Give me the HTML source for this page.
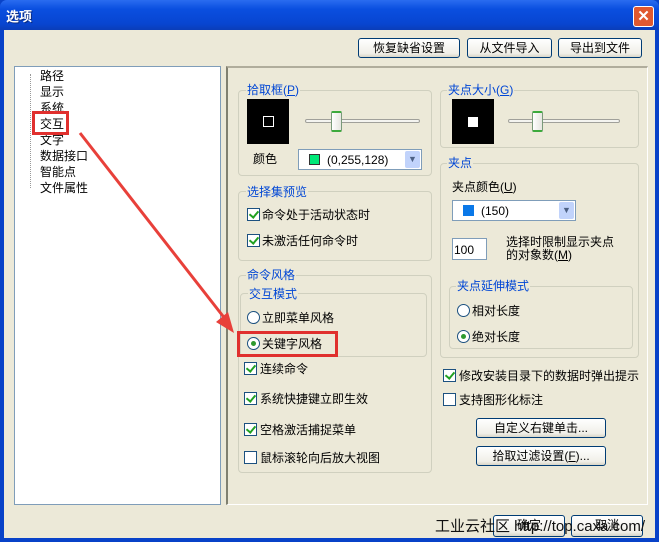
<!DOCTYPE html>
<html><head><meta charset="utf-8"><style>
*{box-sizing:border-box;margin:0;padding:0}
body{width:659px;height:542px;overflow:hidden;background:#0842c8;font-family:"Liberation Sans","Noto Sans CJK SC","WenQuanYi Zen Hei",sans-serif;font-size:12px;color:#000;position:relative}
.a{position:absolute;white-space:nowrap}
#title{left:0;top:0;width:659px;height:30px;background:linear-gradient(#2a6cf0,#0a4fe0 30%,#0845d0 80%,#0a3db8);border-radius:7px 7px 0 0}
#client{left:4px;top:30px;width:651px;height:508px;background:#ece9d8}
.btn{position:absolute;border:1px solid #003c74;border-radius:3px;background:linear-gradient(#fff,#f0efe8 80%,#d8d5c8);text-align:center;font-size:12px;line-height:18px}
.grp{position:absolute;border:1px solid #d0d0bf;border-radius:4px}
.gl{position:absolute;background:#ece9d8;color:#0046d5;padding:0 1px;font-size:12px;line-height:14px}
.cb{position:absolute;width:13px;height:13px;border:1px solid #1c5180;background:#fff}
.cb.c::after{content:"";position:absolute;left:3px;top:0px;width:4px;height:7px;border:solid #21a121;border-width:0 2px 2px 0;transform:rotate(40deg)}
.rb{position:absolute;width:13px;height:13px;border:1px solid #1c5180;border-radius:50%;background:#fff}
.rb.c::after{content:"";position:absolute;left:3px;top:3px;width:5px;height:5px;border-radius:50%;background:#2f9a2f}
.t{position:absolute;white-space:nowrap;font-size:12px;line-height:14px}
.blk{position:absolute;background:#000;width:42px;height:45px}
.sl{position:absolute;height:4px;border:1px solid #a0a09a;background:#f4f4f0;border-radius:2px}
.th{position:absolute;width:11px;height:21px;border:1px solid #7a9a7a;border-radius:2px;background:linear-gradient(90deg,#fff,#e6e6e0);border-top:2px solid #3caa3c;border-bottom:2px solid #3caa3c}
.combo{position:absolute;border:1px solid #7f9db9;background:#fff;height:21px}
.dd{position:absolute;right:1px;top:1px;width:15px;height:17px;background:#c1d3fb;border-radius:2px;color:#4d6185;font-size:9px;text-align:center;line-height:17px}
.red{position:absolute;border:3px solid #e0302e}
</style></head><body>
<div class="a" id="title"></div>
<div class="a" style="left:6px;top:6px;color:#fff;font-weight:bold;font-size:13px;text-shadow:1px 1px #0a2a80">选项</div>
<div class="a" style="left:633px;top:6px;width:21px;height:21px;border:1px solid #fff;border-radius:3px;background:#e0582f;color:#fff;font-size:15px;font-weight:bold;text-align:center;line-height:19px">✕</div>
<div class="a" id="client"></div>

<div class="btn" style="left:358px;top:38px;width:102px;height:20px">恢复缺省设置</div>
<div class="btn" style="left:467px;top:38px;width:85px;height:20px">从文件导入</div>
<div class="btn" style="left:558px;top:38px;width:84px;height:20px">导出到文件</div>

<div class="a" style="left:14px;top:66px;width:207px;height:439px;background:#fff;border:1px solid #7f9db9"></div>
<div class="a" style="left:30px;top:74px;height:114px;border-left:1px dotted #999"></div>
<div class="t" style="left:40px;top:68px;line-height:16px">路径<br>显示<br>系统<br>交互<br>文字<br>数据接口<br>智能点<br>文件属性</div>
<div class="red" style="left:32px;top:111px;width:37px;height:24px"></div>

<div class="a" style="left:226px;top:66px;width:422px;height:439px;border-left:2px solid #808070;border-top:2px solid #b0ad9c;border-right:1px solid #fff;border-bottom:1px solid #fff"></div>

<div class="grp" style="left:238px;top:90px;width:194px;height:86px"></div>
<div class="gl" style="left:246px;top:83px">拾取框(<u>P</u>)</div>
<div class="blk" style="left:247px;top:99px"></div>
<div class="a" style="left:263px;top:116px;width:11px;height:11px;border:1px solid #fff"></div>
<div class="sl" style="left:305px;top:119px;width:115px"></div>
<div class="th" style="left:331px;top:111px"></div>
<div class="t" style="left:253px;top:152px">颜色</div>
<div class="combo" style="left:298px;top:149px;width:124px"><div class="a" style="left:10px;top:4px;width:11px;height:11px;background:#00e878;border:1px solid #333"></div><div class="t" style="left:28px;top:3px">(0,255,128)</div><div class="dd">▼</div></div>

<div class="grp" style="left:238px;top:191px;width:194px;height:70px"></div>
<div class="gl" style="left:246px;top:185px">选择集预览</div>
<div class="cb c" style="left:247px;top:208px"></div><div class="t" style="left:262px;top:208px">命令处于活动状态时</div>
<div class="cb c" style="left:247px;top:234px"></div><div class="t" style="left:262px;top:234px">未激活任何命令时</div>

<div class="grp" style="left:238px;top:275px;width:194px;height:198px"></div>
<div class="gl" style="left:246px;top:268px">命令风格</div>
<div class="grp" style="left:240px;top:293px;width:187px;height:64px"></div>
<div class="gl" style="left:248px;top:287px">交互模式</div>
<div class="rb" style="left:247px;top:311px"></div><div class="t" style="left:262px;top:311px">立即菜单风格</div>
<div class="rb c" style="left:247px;top:337px"></div><div class="t" style="left:262px;top:337px">关键字风格</div>
<div class="red" style="left:237px;top:331px;width:101px;height:26px"></div>
<div class="cb c" style="left:244px;top:362px"></div><div class="t" style="left:260px;top:362px">连续命令</div>
<div class="cb c" style="left:244px;top:392px"></div><div class="t" style="left:260px;top:392px">系统快捷键立即生效</div>
<div class="cb c" style="left:244px;top:423px"></div><div class="t" style="left:260px;top:423px">空格激活捕捉菜单</div>
<div class="cb" style="left:244px;top:451px"></div><div class="t" style="left:260px;top:451px">鼠标滚轮向后放大视图</div>

<div class="grp" style="left:440px;top:90px;width:199px;height:58px"></div>
<div class="gl" style="left:447px;top:83px">夹点大小(<u>G</u>)</div>
<div class="blk" style="left:452px;top:99px"></div>
<div class="a" style="left:468px;top:117px;width:10px;height:10px;background:#fff"></div>
<div class="sl" style="left:508px;top:119px;width:112px"></div>
<div class="th" style="left:532px;top:111px"></div>

<div class="grp" style="left:440px;top:163px;width:199px;height:195px"></div>
<div class="gl" style="left:447px;top:156px">夹点</div>
<div class="t" style="left:452px;top:180px">夹点颜色(<u>U</u>)</div>
<div class="combo" style="left:452px;top:200px;width:124px"><div class="a" style="left:10px;top:4px;width:11px;height:11px;background:#0a78e8"></div><div class="t" style="left:28px;top:3px">(150)</div><div class="dd">▼</div></div>
<div class="a" style="left:452px;top:238px;width:35px;height:22px;border:1px solid #7f9db9;background:#fff;padding:4px 1px;font-size:12px">100</div>
<div class="t" style="left:506px;top:236px;line-height:13px">选择时限制显示夹点<br>的对象数(<u>M</u>)</div>
<div class="grp" style="left:449px;top:286px;width:184px;height:63px"></div>
<div class="gl" style="left:456px;top:279px">夹点延伸模式</div>
<div class="rb" style="left:457px;top:304px"></div><div class="t" style="left:472px;top:304px">相对长度</div>
<div class="rb c" style="left:457px;top:330px"></div><div class="t" style="left:472px;top:330px">绝对长度</div>

<div class="cb c" style="left:443px;top:369px"></div><div class="t" style="left:459px;top:369px">修改安装目录下的数据时弹出提示</div>
<div class="cb" style="left:443px;top:393px"></div><div class="t" style="left:459px;top:393px">支持图形化标注</div>
<div class="btn" style="left:476px;top:418px;width:130px;height:20px">自定义右键单击...</div>
<div class="btn" style="left:476px;top:446px;width:130px;height:20px">拾取过滤设置(<u>F</u>)...</div>

<div class="btn" style="left:493px;top:515px;width:72px;height:22px">确定</div>
<div class="btn" style="left:571px;top:515px;width:72px;height:22px">取消</div>
<div class="a" style="left:435px;top:517px;font-size:15px;line-height:20px;color:#111">工业云社区 http://top.caxa.com/</div>

<svg class="a" style="left:0;top:0" width="659" height="542">
<line x1="80" y1="133" x2="226" y2="320" stroke="#e8403a" stroke-width="3"/>
<polygon points="234,333 216,322 228,312" fill="#e8403a"/>
</svg>
</body></html>
